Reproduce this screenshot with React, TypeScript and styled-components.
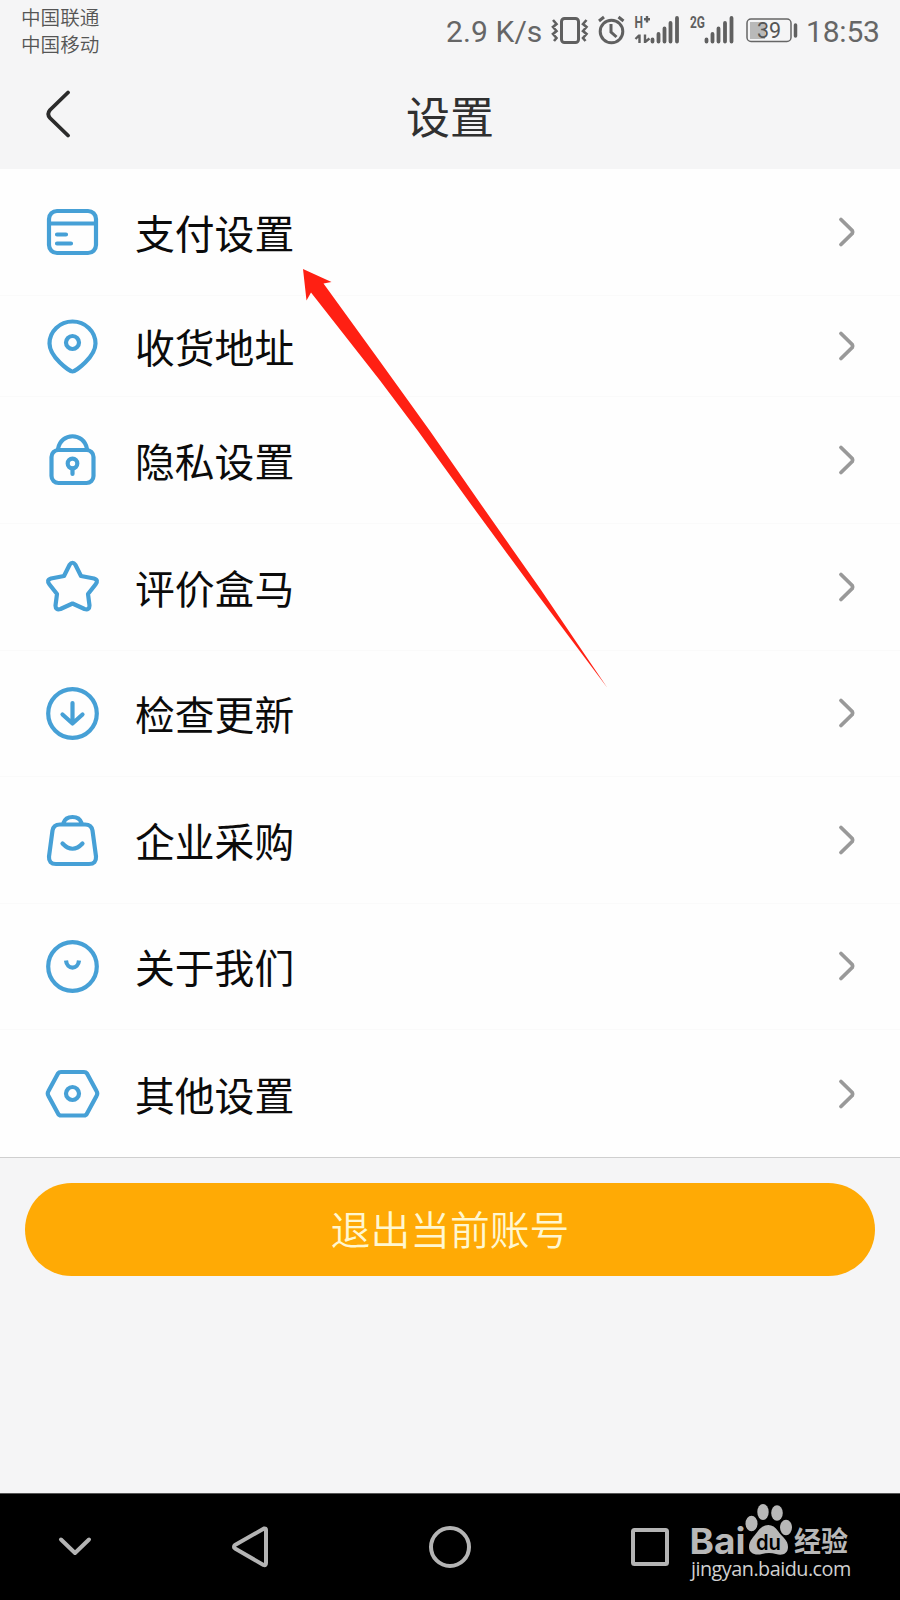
import React from "react";
import styled, { createGlobalStyle } from "styled-components";

const GlobalStyle = createGlobalStyle`
  * { box-sizing: border-box; }
  body {
    margin: 0;
    background: #f5f5f5;
    font-family: Roboto, "Noto Sans CJK SC", sans-serif;
  }
`;

const Screen = styled.div`
  position: relative;
  display: flex;
  flex-direction: column;
  width: 900px;
  height: 1600px;
  overflow: hidden;
  background: #f5f5f6;
`;

const StatusBar = styled.div`
  display: flex;
  justify-content: space-between;
  height: 64px;
  padding: 4px 20px 0 21px;
  color: #666;
`;

const Carriers = styled.div`
  font: 350 19.6px/27px "Noto Sans CJK SC", sans-serif;
  margin-top: -1px;
  color: #555;
`;

const Indicators = styled.div`
  display: flex;
  height: 54px;
  align-items: center;
  font-size: 30px;
`;

const Speed = styled.span`
  width: 97px;
  letter-spacing: 0.1px;
  white-space: nowrap;
`;

const Clock = styled.span`
  width: 81px;
  padding-left: 7px;
  letter-spacing: -0.2px;
  white-space: nowrap;
`;

const StatusIcons = styled.svg`
  display: block;
  width: 256px;
  height: 54px;
`;

const Header = styled.header`
  display: grid;
  grid-template-columns: 120px 1fr 120px;
  align-items: center;
  height: 105px;
`;

const BackIcon = styled.svg`
  display: block;
  width: 28px;
  height: 50px;
  margin: 0 0 5px 44px;
`;

const Title = styled.h1`
  margin: 0 0 3px;
  text-align: center;
  font: 400 44px/60px "Noto Sans CJK SC", sans-serif;
  color: #303030;
`;

const List = styled.ul`
  margin: 0;
  padding: 0;
  list-style: none;
  background: #fefefe;
  border-bottom: 1px solid #cfcfcf;
`;

const Item = styled.li<{ $height: number }>`
  display: flex;
  align-items: center;
  height: ${(p) => p.$height}px;
  padding: 0 43px 0 44px;
  border-bottom: 1px solid #fafafa;
  &:last-child { border-bottom: 0; }
`;

const ItemIcon = styled.svg`
  width: 56px;
  height: 60px;
  flex: none;
  fill: none;
  stroke: #46a0d6;
  stroke-width: 4.2;
  stroke-linecap: round;
  stroke-linejoin: round;
`;

const Label = styled.span`
  flex: 1;
  margin-left: 35px;
  font: 400 39.8px/58px "Noto Sans CJK SC", sans-serif;
  color: #0b0b0b;
`;

const Chevron = styled.svg`
  width: 20px;
  height: 32px;
  fill: none;
  stroke: #999;
  stroke-width: 3.8;
  stroke-linejoin: round;
  stroke-linecap: round;
`;

const Footer = styled.div`
  flex: 1;
  padding: 25px;
`;

const LogoutButton = styled.button`
  display: block;
  width: 100%;
  height: 93px;
  padding: 0 0 4px;
  border: 0;
  border-radius: 47px;
  background: #ffaa05;
  color: #fff7d0;
  font: 350 39.8px/89px "Noto Sans CJK SC", sans-serif;
`;

const NavBar = styled.nav`
  display: flex;
  align-items: center;
  height: 107px;
  background: #000;
  border-top: 1px solid #555;
`;

const NavIcons = styled.svg`
  display: block;
  flex: none;
  width: 680px;
  height: 106px;
  fill: none;
  stroke: #b4b4b4;
  stroke-width: 4;
  stroke-linecap: round;
  stroke-linejoin: round;
`;

const Brand = styled.div`
  display: flex;
  flex-direction: column;
  height: 106px;
  padding: 8px 0 0 11px;
  color: #b8b8b8;
`;

const BrandLogo = styled.svg`
  display: block;
  width: 170px;
  height: 54px;
  overflow: visible;
`;

const BrandUrl = styled.span`
  font: 400 19.8px/26px "Open Sans", sans-serif;
  letter-spacing: -0.5px;
  color: #d0d0d0;
  white-space: nowrap;
`;

const Pointer = styled.svg`
  position: absolute;
  left: 300px;
  top: 266px;
  width: 312px;
  height: 426px;
  pointer-events: none;
`;

const rows = [
  {
    label: "支付设置",
    height: 127,
    icon: (
      <>
        <rect x="5" y="9" width="47" height="42" rx="8" />
        <path d="M5 21.5H52M13 32.500h9M13 41.500h14" />
      </>
    ),
  },
  {
    label: "收货地址",
    height: 101,
    icon: (
      <>
        <path d="M28.500 55.500C25.500 55.500 5.500 41 5.500 27.500A23 22 0 0 1 51.500 27.500C51.500 41 31.500 55.500 28.500 55.500Z" />
        <circle cx="28.500" cy="26.500" r="6.500" />
      </>
    ),
  },
  {
    label: "隐私设置",
    height: 127,
    icon: (
      <>
        <rect x="7.500" y="20" width="42" height="33" rx="7" />
        <path d="M14 19C17 2 40 2 43 19M28.500 38.500v5.500" />
        <circle cx="28.500" cy="33.500" r="4.800" />
      </>
    ),
  },
  {
    label: "评价盒马",
    height: 126.5,
    icon: (
      <path d="M25.500 8Q28.500 3.500 31.500 8L37 19L50 21.500Q55 23 51.500 27.500L44 37L45.500 48.500Q45.500 53.500 40.500 52L28.500 46.500L16.500 52Q11.500 53.500 11.500 48.500L13 37L5.500 27.500Q2 23 7 21.500L20 19Z" />
    ),
  },
  {
    label: "检查更新",
    height: 126.5,
    icon: (
      <>
        <circle cx="28.500" cy="30.500" r="24.300" />
        <path d="M28.500 20V40.500M18.500 31.500L28.500 40.500L38.500 31.500" />
      </>
    ),
  },
  {
    label: "企业采购",
    height: 126.5,
    icon: (
      <path d="M16 14.500H41Q47.500 14.500 48.500 20.500L52 46.500Q52.500 54 45 54H12Q4.500 54 5 46.500L8.500 20.500Q9.500 14.500 16 14.500ZM19.500 13C22 5 35 5 37.500 13M18.500 33.500Q28.500 44 38.500 33.500" />
    ),
  },
  {
    label: "关于我们",
    height: 126.5,
    icon: (
      <>
        <circle cx="28.500" cy="30.500" r="24.300" />
        <path d="M22 24.500C23 34 34 34 35 24.500" strokeLinecap="butt" />
      </>
    ),
  },
  {
    label: "其他设置",
    height: 127,
    icon: (
      <>
        <path d="M17 8H40Q42 8 43 9.500L52.500 27Q54 29.500 52.500 32L43 49.500Q42 51.500 40 51.500H17Q15 51.500 14 49.500L4.500 32Q3 29.500 4.500 27L14 9.500Q15 8 17 8Z" />
        <circle cx="28.500" cy="29.500" r="6.500" />
      </>
    ),
  },
];

const SignalGlyphs = () => (
  <StatusIcons viewBox="543 4 256 54">
    <g fill="none" stroke="#606060" strokeWidth="3">
      <rect x="561.500" y="18.500" width="17" height="24" rx="3" />
      <path d="M553 20l3.500 4-3.500 3 3.500 4-3.500 3 3.500 4-2.500 3M586.500 20l-3.500 4 3.500 3-3.500 4 3.500 3-3.500 4 2.500 3" strokeWidth="2.600" />
      <circle cx="611.500" cy="31.500" r="11.300" />
      <path d="M611 24v8l5.500 5M599 21l5-4M618.500 17l5 4" />
      <path d="M639.500 34.500V43M635.500 39l3.500-3.500M645 34.500V43M645 42l4.500-3.500M647 16v6.500M644 19.300h6" strokeWidth="2.400" />
    </g>
    <g stroke="#606060" strokeWidth="3.800" strokeLinecap="round">
      <path d="M652.500 39.500v2M658.500 34v7.500M664.500 28.500v13M670.500 23v18.500M677 18v23.500M706.500 39.500v2M712.500 34v7.500M718.500 28.500v13M725 23v18.500M731.500 18v23.500" />
    </g>
    <g fill="#606060" fontFamily="Roboto, sans-serif">
      <text x="634.500" y="27.500" fontSize="16" fontWeight="700" textLength="8.500" lengthAdjust="spacingAndGlyphs">H</text>
      <text x="690" y="28" fontSize="16" fontWeight="700" textLength="15" lengthAdjust="spacingAndGlyphs">2G</text>
    </g>
    <rect x="747" y="19" width="44" height="22.500" rx="4" fill="none" stroke="#666" strokeWidth="1.500" />
    <rect x="750" y="22" width="15" height="17" fill="#b9b9b9" />
    <path d="M795.500 25v11" stroke="#606060" strokeWidth="3.500" strokeLinecap="round" />
    <text x="757" y="37.800" fontSize="21.500" fill="#555" fontFamily="Roboto, sans-serif">39</text>
  </StatusIcons>
);

export default function App() {
  return (
    <>
      <GlobalStyle />
      <Screen>
        <StatusBar>
          <Carriers>
            <div>中国联通</div>
            <div>中国移动</div>
          </Carriers>
          <Indicators>
            <Speed>2.9 K/s</Speed>
            <SignalGlyphs />
            <Clock>18:53</Clock>
          </Indicators>
        </StatusBar>
        <Header>
          <BackIcon viewBox="44 89 28 50">
            <path d="M68 92.500L50 110Q46.500 114 50 118L68 135.500" fill="none" stroke="#2b2b2b" strokeWidth="3.800" strokeLinecap="round" />
          </BackIcon>
          <Title>设置</Title>
        </Header>
        <List>
          {rows.map((row) => (
            <Item key={row.label} $height={row.height}>
              <ItemIcon viewBox="0 0 56 60">{row.icon}</ItemIcon>
              <Label>{row.label}</Label>
              <Chevron viewBox="0 0 20 32">
                <path d="M4 3.500L15.200 14.500Q16 16 15.200 17.500L4 28.500" />
              </Chevron>
            </Item>
          ))}
        </List>
        <Footer>
          <LogoutButton>退出当前账号</LogoutButton>
        </Footer>
        <NavBar>
          <NavIcons viewBox="0 1494 680 106">
            <path d="M61 1539.500L75 1553L89 1539.500" />
            <path d="M264 1528.500Q266 1528 266 1530V1563Q266 1566 263.500 1565L235 1548.500Q233 1547 235 1545Z" />
            <circle cx="450" cy="1547" r="19" />
            <rect x="633" y="1530" width="34" height="34" rx="1.500" />
          </NavIcons>
          <Brand>
            <BrandLogo viewBox="691 1502 170 54">
              <g fill="#b8b8b8">
                <text x="689.500" y="1553.500" fontFamily="Inter, sans-serif" fontSize="35.500" fontWeight="700" textLength="56" lengthAdjust="spacingAndGlyphs">Bai</text>
                <ellipse cx="751.500" cy="1523.500" rx="6" ry="7.800" />
                <ellipse cx="763" cy="1512" rx="5.700" ry="8" />
                <ellipse cx="777" cy="1513" rx="5.800" ry="7.700" />
                <ellipse cx="786" cy="1527.500" rx="6" ry="7.800" />
                <path d="M758 1531C764 1523 773 1523 778 1531C783 1538 788 1540 788 1547C788 1554 782 1556 776 1554Q769 1552 762 1554C755 1556 749 1553 749 1547C749 1540 754 1537 758 1531Z" />
              </g>
              <text x="756" y="1550" fontFamily="Inter, sans-serif" fontSize="21" fontWeight="600" fill="#000" textLength="25" lengthAdjust="spacingAndGlyphs">du</text>
              <text x="794" y="1551.500" fontFamily="Noto Sans CJK SC, sans-serif" fontSize="28" fontWeight="700" fill="#b8b8b8" textLength="54" lengthAdjust="spacingAndGlyphs">经验</text>
            </BrandLogo>
            <BrandUrl>jingyan.baidu.com</BrandUrl>
          </Brand>
        </NavBar>
        <Pointer viewBox="300 266 312 426">
          <path d="M303 269L331.500 282L323.500 283.500L380 361.500L430 431L480 503L540 588.500L607.500 688L534 590L470 503L418 431L380 380.500L311 292.500L306.500 300.500Z" fill="#ff2013" />
        </Pointer>
      </Screen>
    </>
  );
}
